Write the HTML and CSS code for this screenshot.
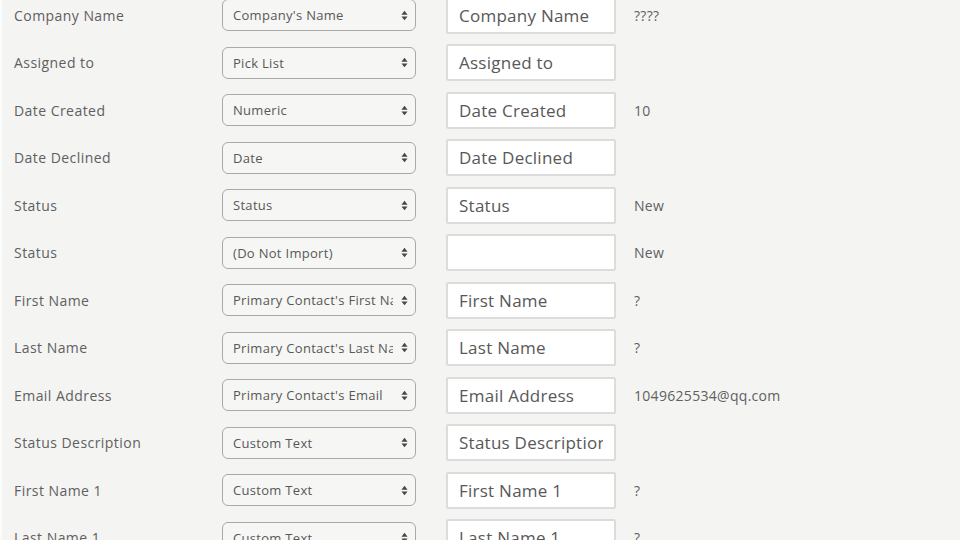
FILE: index.html
```html
<!DOCTYPE html>
<html>
<head>
<meta charset="utf-8">
<link rel="stylesheet" href="styles.css">
</head>
<body>
<div class="map">
  <div class="row"><div class="label">Company Name</div><div class="sel"><span class="sel-text">Company's Name</span><svg class="arrows" viewBox="0 0 8 12"><path d="M4 0.5 L7.5 5 L0.5 5 Z M0.5 7 L7.5 7 L4 11.5 Z"/></svg></div><input class="field" value="Company Name"><div class="val">????</div></div>
  <div class="row"><div class="label">Assigned to</div><div class="sel"><span class="sel-text">Pick List</span><svg class="arrows" viewBox="0 0 8 12"><path d="M4 0.5 L7.5 5 L0.5 5 Z M0.5 7 L7.5 7 L4 11.5 Z"/></svg></div><input class="field" value="Assigned to"><div class="val"></div></div>
  <div class="row"><div class="label">Date Created</div><div class="sel"><span class="sel-text">Numeric</span><svg class="arrows" viewBox="0 0 8 12"><path d="M4 0.5 L7.5 5 L0.5 5 Z M0.5 7 L7.5 7 L4 11.5 Z"/></svg></div><input class="field" value="Date Created"><div class="val">10</div></div>
  <div class="row"><div class="label">Date Declined</div><div class="sel"><span class="sel-text">Date</span><svg class="arrows" viewBox="0 0 8 12"><path d="M4 0.5 L7.5 5 L0.5 5 Z M0.5 7 L7.5 7 L4 11.5 Z"/></svg></div><input class="field" value="Date Declined"><div class="val"></div></div>
  <div class="row"><div class="label">Status</div><div class="sel"><span class="sel-text">Status</span><svg class="arrows" viewBox="0 0 8 12"><path d="M4 0.5 L7.5 5 L0.5 5 Z M0.5 7 L7.5 7 L4 11.5 Z"/></svg></div><input class="field" value="Status"><div class="val">New</div></div>
  <div class="row"><div class="label">Status</div><div class="sel"><span class="sel-text">(Do Not Import)</span><svg class="arrows" viewBox="0 0 8 12"><path d="M4 0.5 L7.5 5 L0.5 5 Z M0.5 7 L7.5 7 L4 11.5 Z"/></svg></div><input class="field" value=""><div class="val">New</div></div>
  <div class="row"><div class="label">First Name</div><div class="sel"><span class="sel-text">Primary Contact's First Name</span><svg class="arrows" viewBox="0 0 8 12"><path d="M4 0.5 L7.5 5 L0.5 5 Z M0.5 7 L7.5 7 L4 11.5 Z"/></svg></div><input class="field" value="First Name"><div class="val">?</div></div>
  <div class="row"><div class="label">Last Name</div><div class="sel"><span class="sel-text">Primary Contact's Last Name</span><svg class="arrows" viewBox="0 0 8 12"><path d="M4 0.5 L7.5 5 L0.5 5 Z M0.5 7 L7.5 7 L4 11.5 Z"/></svg></div><input class="field" value="Last Name"><div class="val">?</div></div>
  <div class="row"><div class="label">Email Address</div><div class="sel"><span class="sel-text">Primary Contact's Email</span><svg class="arrows" viewBox="0 0 8 12"><path d="M4 0.5 L7.5 5 L0.5 5 Z M0.5 7 L7.5 7 L4 11.5 Z"/></svg></div><input class="field" value="Email Address"><div class="val">1049625534@qq.com</div></div>
  <div class="row"><div class="label">Status Description</div><div class="sel"><span class="sel-text">Custom Text</span><svg class="arrows" viewBox="0 0 8 12"><path d="M4 0.5 L7.5 5 L0.5 5 Z M0.5 7 L7.5 7 L4 11.5 Z"/></svg></div><input class="field" value="Status Description"><div class="val"></div></div>
  <div class="row"><div class="label">First Name 1</div><div class="sel"><span class="sel-text">Custom Text</span><svg class="arrows" viewBox="0 0 8 12"><path d="M4 0.5 L7.5 5 L0.5 5 Z M0.5 7 L7.5 7 L4 11.5 Z"/></svg></div><input class="field" value="First Name 1"><div class="val">?</div></div>
  <div class="row"><div class="label">Last Name 1</div><div class="sel"><span class="sel-text">Custom Text</span><svg class="arrows" viewBox="0 0 8 12"><path d="M4 0.5 L7.5 5 L0.5 5 Z M0.5 7 L7.5 7 L4 11.5 Z"/></svg></div><input class="field" value="Last Name 1"><div class="val">?</div></div>
</div>
</body>
</html>
```
FILE: styles.css
```css
html, body {
  margin: 0;
  padding: 0;
  background: #f4f4f3;
  overflow: hidden;
}
body {
  font-family: "Open Sans", "Liberation Sans", sans-serif;
  color: #5a5a5a;
  border-left: 2px solid #fbfbfa;
  height: 540px;
  box-sizing: border-box;
}
.map {
  margin-top: -8.4px;
  display: flex;
  flex-direction: column;
}
.row {
  height: 47.5px;
  display: grid;
  grid-template-columns: 208px 194px 30px 170px 18px 1fr;
  align-items: center;
  padding-left: 12px;
}
.label {
  grid-column: 1;
  font-size: 14px;
  letter-spacing: 0.45px;
  color: #606060;
}
.sel {
  grid-column: 2;
  height: 32px;
  box-sizing: border-box;
  border: 1px solid #a9a9a9;
  border-radius: 6px;
  background: #f6f6f5;
  display: flex;
  align-items: center;
  padding: 0 7px 0 10px;
  gap: 8px;
}
.sel-text {
  flex: 1;
  overflow: hidden;
  white-space: nowrap;
  font-size: 13px;
  letter-spacing: 0.3px;
  color: #585858;
}
.arrows {
  width: 7px;
  height: 11px;
  fill: #474747;
  flex: none;
}
.field {
  grid-column: 4;
  height: 37px;
  box-sizing: border-box;
  border: 2px solid #dcdcdc;
  border-radius: 2px;
  background: #fff;
  padding: 0 11px;
  font-family: "Open Sans", "Liberation Sans", sans-serif;
  font-size: 17px;
  letter-spacing: 0.25px;
  color: #585858;
  outline: none;
  width: 170px;
  margin: 0;
}
.val {
  grid-column: 6;
  font-size: 14px;
  letter-spacing: 0.3px;
  color: #606060;
}
```
